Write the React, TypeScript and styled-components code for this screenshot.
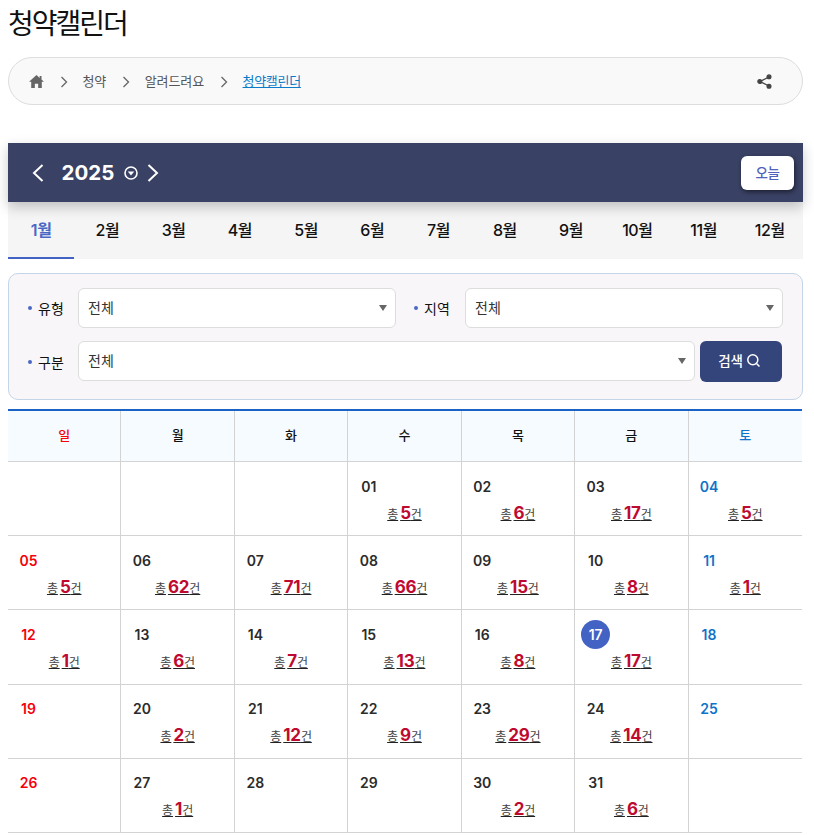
import React from "react";
import styled, { createGlobalStyle } from "styled-components";

const Global = createGlobalStyle`
  html, body { margin: 0; padding: 0; background: #fff; }
  body { font-family: Inter, "Noto Sans CJK KR", sans-serif; color: #111; overflow: hidden; }
  * { box-sizing: border-box; }
`;

const Page = styled.div`
  width: 795px;
  margin-left: 8px;
`;
const Title = styled.h1`
  margin: 0;
  height: 57px;
  padding-top: 4px;
  font-size: 28px;
  line-height: 40px;
  font-weight: 400;
  letter-spacing: -2px;
  color: #111;
`;
const Crumbs = styled.nav`
  height: 48px;
  border: 1px solid #ddd;
  border-radius: 24px;
  background: #f9f9f9;
  display: flex;
  align-items: center;
  padding: 0 30px 0 20px;
  font-size: 13px;
  line-height: 18px;
  color: #555;
`;
const CrumbText = styled.span`
  letter-spacing: -0.1px;
  margin-top: -1px;
`;
const CrumbLink = styled.a`
  color: #0a7bc8;
  text-decoration: underline;
  font-weight: 400;
  letter-spacing: -0.3px;
  margin-top: -1px;
`;
const Sep = styled.svg`
  width: 8px;
  height: 12px;
  margin: 1px 15px 0 15.5px;
  flex: none;
`;
const Spacer = styled.div`
  flex: 1;
`;
const Bar = styled.div`
  margin-top: 38px;
  height: 59px;
  background: #394164;
  display: flex;
  align-items: center;
  padding: 0 9px 0 24px;
  box-shadow: 0 5px 12px rgba(0, 0, 0, 0.22);
  position: relative;
  color: #fff;
`;
const Year = styled.span`
  font-size: 20.5px;
  font-weight: 700;
  margin-left: 17.5px;
  margin-right: 10px;
`;
const Today = styled.button`
  width: 53px;
  height: 34px;
  border: 0;
  border-radius: 6px;
  background: #fff;
  color: #4f62bd;
  font: 500 13.5px Inter, "Noto Sans CJK KR", sans-serif;
  box-shadow: 1px 2px 4px rgba(0, 0, 0, 0.5);
  letter-spacing: -0.3px;
  padding: 0 0 2px;
`;
const Months = styled.div`
  display: grid;
  grid-template-columns: repeat(12, 1fr);
  height: 57px;
  background: #f5f5f5;
`;
const Month = styled.div<{ $active?: boolean }>`
  display: flex;
  align-items: center;
  justify-content: center;
  padding-bottom: 1px;
  font-size: 16px;
  font-weight: ${(p) => (p.$active ? 600 : 500)};
  letter-spacing: -0.4px;
  color: ${(p) => (p.$active ? "#4a68c4" : "#111")};
  border-bottom: 2px solid ${(p) => (p.$active ? "#4263c4" : "transparent")};
`;
const Filter = styled.div`
  margin-top: 14px;
  height: 127px;
  border: 1px solid #c4d5e8;
  border-radius: 10px;
  background: #f8f6f8;
  padding: 14px 19px 0 19px;
  display: grid;
  grid-template-columns: 50px 318px 69px 318px;
  grid-template-rows: 40px 41px;
  row-gap: 13px;
`;
const Label = styled.label`
  display: flex;
  align-items: center;
  font-size: 14px;
  font-weight: 400;
  letter-spacing: 0;
  color: #111;
  &::before {
    content: "";
    width: 4px;
    height: 4px;
    border-radius: 50%;
    background: #4a68c4;
    margin-right: 6px;
    flex: none;
  }
`;
const FieldLabel = styled(Label)`
  padding-left: 18px;
`;
const Select = styled.div`
  height: 40px;
  border: 1px solid #ddd;
  border-radius: 6px;
  background: #fff;
  display: flex;
  align-items: center;
  justify-content: space-between;
  padding: 0 8px 3px 9px;
  font-size: 14px;
  color: #333;
  &::after {
    content: "";
    border-left: 4.5px solid transparent;
    border-right: 4.5px solid transparent;
    border-top: 6px solid #666;
    margin-top: 3px;
  }
`;
const WideRow = styled.div`
  grid-column: 2 / 5;
  display: flex;
  gap: 5px;
`;
const WideSelect = styled(Select)`
  width: 617px;
`;
const Search = styled.button`
  width: 82px;
  height: 41px;
  border: 0;
  border-radius: 6px;
  background: #34457c;
  color: #fff;
  font: 500 13.5px Inter, "Noto Sans CJK KR", sans-serif;
  letter-spacing: -0.2px;
  display: flex;
  align-items: center;
  justify-content: center;
  gap: 3px;
  padding: 0 3px 3px 0;
`;
const Calendar = styled.div`
  margin-top: 9px;
  width: 794px;
  border-top: 2px solid #1a62c4;
  display: grid;
  grid-template-columns: repeat(7, 1fr);
`;
type Tone = "sun" | "sat" | "plain";
const toneColor = (t: Tone) => (t === "sun" ? "#f5000a" : t === "sat" ? "#0f73c8" : "#2b2b2b");
const Head = styled.div<{ $tone: Tone; $last: boolean }>`
  height: 51px;
  background: #f6fbff;
  border-right: ${(p) => (p.$last ? "0" : "1px solid #d3d3d3")};
  border-bottom: 1px solid #d3d3d3;
  display: flex;
  align-items: center;
  justify-content: center;
  padding-bottom: 3px;
  font-size: 13px;
  font-weight: 500;
  color: ${(p) => (p.$tone === "plain" ? "#111" : toneColor(p.$tone))};
`;
const Cell = styled.div<{ $last: boolean }>`
  height: 74.2px;
  border-right: ${(p) => (p.$last ? "0" : "1px solid #d3d3d3")};
  border-bottom: 1px solid #d3d3d3;
  padding: 9.5px 6px 0;
  display: flex;
  flex-direction: column;
`;
const DateNum = styled.span<{ $tone: Tone; $today?: boolean }>`
  width: 29px;
  height: 29px;
  border-radius: 50%;
  display: flex;
  align-items: center;
  justify-content: center;
  font-size: 14px;
  font-weight: 600;
  background: ${(p) => (p.$today ? "#4263c4" : "transparent")};
  color: ${(p) => (p.$today ? "#fff" : toneColor(p.$tone))};
`;
const Count = styled.a`
  align-self: center;
  margin-top: 0;
  font-size: 12px;
  line-height: 24px;
  color: #444;
  text-decoration: underline;
  text-decoration-color: #222;
  letter-spacing: -0.1px;
`;
const Num = styled.b`
  font-size: 17px;
  font-weight: 700;
  color: #bf0a30;
  margin-left: 2px;
  letter-spacing: -0.2px;
`;
const IconGap = styled.span`
  width: 9px;
  flex: none;
`;

const counts: Record<number, number> = {
  1: 5, 2: 6, 3: 17, 4: 5, 5: 5, 6: 62, 7: 71, 8: 66, 9: 15, 10: 8, 11: 1, 12: 1, 13: 6, 14: 7, 15: 13, 16: 8,
  17: 17, 20: 2, 21: 12, 22: 9, 23: 29, 24: 14, 27: 1, 30: 2, 31: 6,
};
const weekDays = ["일", "월", "화", "수", "목", "금", "토"];
const months = Array.from({ length: 12 }, (_, i) => i + 1);
const cells: (number | null)[] = [null, null, null, ...Array.from({ length: 31 }, (_, i) => i + 1), null];
const toneOf = (i: number): Tone => (i === 0 ? "sun" : i === 6 ? "sat" : "plain");

const Chevron = ({ dir }: { dir: "l" | "r" }) => (
  <svg width="12" height="18" viewBox="0 0 12 18" fill="none" stroke="#fff" strokeWidth="2">
    <path d={dir === "l" ? "M10.5 1 2 9l8.5 8" : "M1.5 1 10 9l-8.5 8"} />
  </svg>
);
const CrumbSep = () => (
  <Sep viewBox="0 0 8 12" fill="none" stroke="#666" strokeWidth="1.3">
    <path d="M1.5 1 6.5 6l-5 5" />
  </Sep>
);

export default function App() {
  return (
    <Page>
      <Global />
      <Title>청약캘린더</Title>
      <Crumbs>
        <svg width="15" height="13" viewBox="0 0 16 14" fill="#666">
          <path d="M8 0 0 7.2h2.3V14h3.9V9.3h3.6V14h3.9V7.2H16L13.4 4.9V1h-2v2.1z" />
        </svg>
        <CrumbSep />
        <CrumbText>청약</CrumbText>
        <CrumbSep />
        <CrumbText>알려드려요</CrumbText>
        <CrumbSep />
        <CrumbLink>청약캘린더</CrumbLink>
        <Spacer />
        <svg width="15" height="15" viewBox="0 0 15 15" fill="#444" stroke="#444" strokeWidth="1.3">
          <path d="M12 3 3 7.5l9 4.5" fill="none" />
          <circle cx="12" cy="2.8" r="1.9" />
          <circle cx="2.8" cy="7.5" r="1.9" />
          <circle cx="12" cy="12.2" r="1.9" />
        </svg>
      </Crumbs>
      <Bar>
        <Chevron dir="l" />
        <Year>2025</Year>
        <svg width="14" height="14" viewBox="0 0 14 14" fill="none" stroke="#fff" strokeWidth="1.6">
          <circle cx="7" cy="7" r="6" />
          <path d="M3.8 5.5h6.4L7 9.6z" fill="#fff" stroke="none" />
        </svg>
        <IconGap />
        <Chevron dir="r" />
        <Spacer />
        <Today>오늘</Today>
      </Bar>
      <Months>
        {months.map((m) => (
          <Month key={m} $active={m === 1}>
            {m}월
          </Month>
        ))}
      </Months>
      <Filter>
        <Label>유형</Label>
        <Select>전체</Select>
        <FieldLabel>지역</FieldLabel>
        <Select>전체</Select>
        <Label>구분</Label>
        <WideRow>
          <WideSelect>전체</WideSelect>
          <Search>
            검색
            <svg width="15" height="15" viewBox="0 0 15 15" fill="none" stroke="#fff" strokeWidth="1.5">
              <circle cx="6.8" cy="6.8" r="5" />
              <path d="m10.5 10.5 3 3" />
            </svg>
          </Search>
        </WideRow>
      </Filter>
      <Calendar>
        {weekDays.map((d, i) => (
          <Head key={d} $tone={toneOf(i)} $last={i === 6}>
            {d}
          </Head>
        ))}
        {cells.map((day, idx) => {
          const col = idx % 7;
          return (
            <Cell key={idx} $last={col === 6}>
              {day !== null && (
                <DateNum $tone={toneOf(col)} $today={day === 17}>
                  {String(day).padStart(2, "0")}
                </DateNum>
              )}
              {day !== null && counts[day] !== undefined && (
                <Count>
                  총<Num>{counts[day]}</Num>건
                </Count>
              )}
            </Cell>
          );
        })}
      </Calendar>
    </Page>
  );
}
